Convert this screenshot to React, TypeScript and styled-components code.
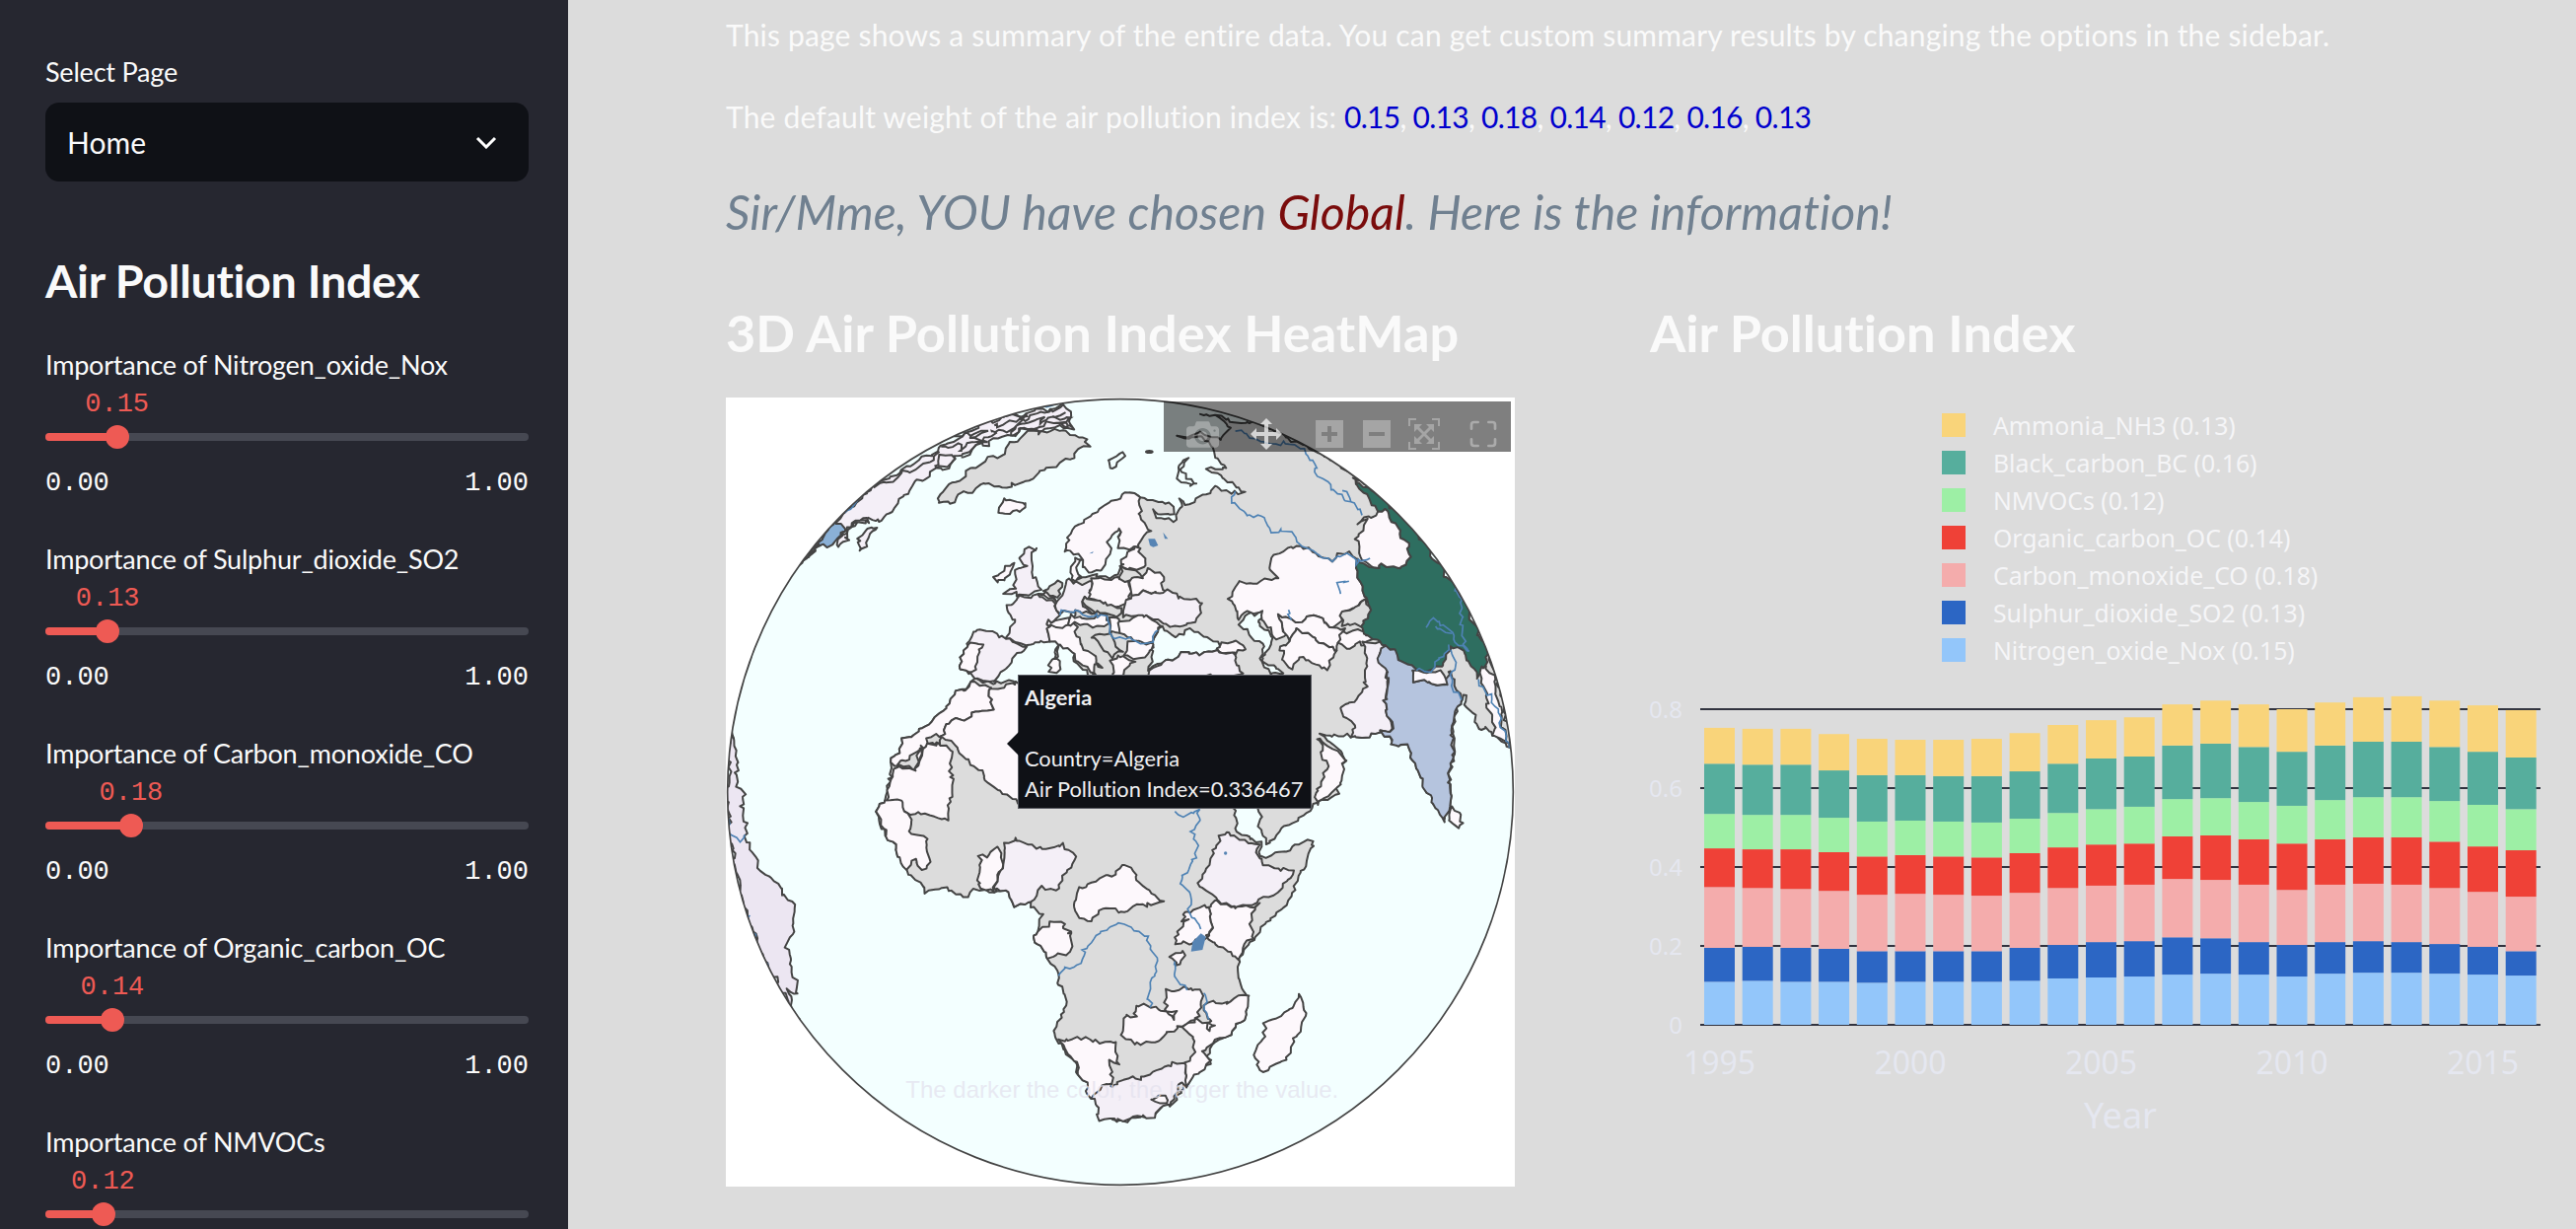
import React from 'react';
import styled, { createGlobalStyle } from 'styled-components';
import { Maximize } from 'lucide-react';

const SANS = `Lato, "Noto Sans", sans-serif`;
const MONO = `"Liberation Mono", monospace`;

const WEIGHTS = [
    ['Nitrogen_oxide_Nox', 0.15],
    ['Sulphur_dioxide_SO2', 0.13],
    ['Carbon_monoxide_CO', 0.18],
    ['Organic_carbon_OC', 0.14],
    ['NMVOCs', 0.12],
] as const;

const DEFAULT_WEIGHTS = ['0.15', '0.13', '0.18', '0.14', '0.12', '0.16', '0.13'];

const LEGEND = [
    ['Ammonia_NH3 (0.13)', '#f9d47a'],
    ['Black_carbon_BC (0.16)', '#56ae9d'],
    ['NMVOCs (0.12)', '#9defa5'],
    ['Organic_carbon_OC (0.14)', '#ef4137'],
    ['Carbon_monoxide_CO (0.18)', '#f4acac'],
    ['Sulphur_dioxide_SO2 (0.13)', '#2c66c4'],
    ['Nitrogen_oxide_Nox (0.15)', '#93c6fa'],
];

// stack colours, bottom to top
const STACK_COLORS = ['#93c6fa', '#2c66c4', '#f4acac', '#ef4137', '#9defa5', '#56ae9d', '#f9d47a'];

// cumulative height of each series per year, measured against the axis (825 = 1.0)
const STACKS = [
    [90, 161, 288, 369, 441, 546, 621],
    [92, 163, 286, 367, 439, 544, 619],
    [90, 161, 284, 367, 439, 544, 619],
    [90, 159, 280, 361, 433, 532, 608],
    [88, 154, 272, 352, 425, 522, 598],
    [90, 154, 274, 355, 427, 522, 596],
    [90, 154, 272, 352, 425, 520, 596],
    [90, 154, 270, 350, 423, 520, 598],
    [92, 161, 276, 359, 431, 530, 610],
    [97, 167, 286, 371, 443, 546, 627],
    [99, 173, 291, 377, 451, 557, 637],
    [101, 175, 293, 379, 456, 561, 643],
    [105, 183, 305, 394, 472, 584, 670],
    [107, 181, 303, 396, 474, 588, 678],
    [105, 173, 293, 388, 466, 581, 670],
    [101, 167, 282, 379, 458, 571, 660],
    [107, 173, 293, 388, 470, 584, 674],
    [109, 175, 295, 392, 476, 592, 685],
    [109, 173, 293, 392, 476, 592, 687],
    [107, 169, 286, 383, 468, 581, 678],
    [105, 163, 278, 373, 460, 571, 668],
    [103, 154, 268, 365, 451, 559, 658],
];

const Y0 = 359;
const toPx = (h: number) => (h / 825) * 400;

const GlobalStyle = createGlobalStyle`
    html, body {
        margin: 0;
        height: 100%;
        overflow: hidden;
        background: #dcdcdc;
        font-family: ${SANS};
        font-variant-ligatures: none;
    }
`;

const Page = styled.div`
    display: flex;
    height: 1246px;
    overflow: hidden;
`;

const Sidebar = styled.aside`
    width: 576px;
    flex: none;
    box-sizing: border-box;
    padding: 57px 40px 0 46px;
    background: #262730;
    color: #fafafa;
    overflow: hidden;
`;

const FieldLabel = styled.div`
    font-size: 27px;
    line-height: 32px;
    letter-spacing: -0.2px;
    white-space: nowrap;
`;

const SelectBox = styled.div`
    display: flex;
    align-items: center;
    justify-content: space-between;
    height: 80px;
    margin-top: 15px;
    padding: 0 32px 0 22px;
    border-radius: 14px;
    background: #0f1116;
    font-size: 30px;
`;

const SidebarTitle = styled.h2`
    margin: 72px 0 42px;
    font-size: 46.7px;
    line-height: 56px;
    font-weight: 700;
    letter-spacing: -0.3px;
    white-space: nowrap;
`;

const SliderBlock = styled.div`
    margin-bottom: 45.5px;
`;

const SliderValue = styled.div`
    margin-top: 8px;
    font-family: ${MONO};
    font-size: 27px;
    line-height: 32px;
    color: #ee5a54;
`;

const Track = styled.div`
    position: relative;
    height: 8px;
    margin: 13px 0 26.5px;
    border-radius: 4px;
    background: #464852;
`;

const TrackFill = styled.div`
    position: absolute;
    left: 0;
    top: 0;
    bottom: 0;
    border-radius: 4px;
    background: #ee5a54;
`;

const Thumb = styled.div`
    position: absolute;
    top: -8px;
    width: 24px;
    height: 24px;
    margin-left: -12px;
    border-radius: 50%;
    background: #ee5a54;
`;

const Bounds = styled.div`
    display: flex;
    justify-content: space-between;
    font-family: ${MONO};
    font-size: 27px;
    line-height: 32px;
`;

const Main = styled.main`
    flex: 1;
    min-width: 0;
    padding: 15px 0 0 160px;
    color: #fafafa;
`;

const Paragraph = styled.p<{ $gap?: number }>`
    margin: ${(p) => p.$gap ?? 0}px 0 0;
    font-size: 30px;
    line-height: 40px;
    letter-spacing: 0.18px;
    white-space: nowrap;
`;

const WeightList = styled.span`
    letter-spacing: -0.72px;
`;

const Weight = styled.span`
    color: #0000cd;
`;

const Greeting = styled.p`
    margin: 41px 0 0;
    font-size: 48.3px;
    line-height: 70px;
    font-style: italic;
    color: #708090;
    white-space: nowrap;
`;

const Chosen = styled.span`
    color: #7a0c0c;
`;

const Columns = styled.div`
    display: grid;
    grid-template-columns: 800px 1fr;
    column-gap: 137px;
    margin-top: 53px;
`;

const Heading = styled.h2`
    margin: 0 0 31px;
    font-size: 52.3px;
    line-height: 70px;
    font-weight: 700;
    white-space: nowrap;
`;

const MapFrame = styled.div`
    position: relative;
    width: 800px;
    height: 800px;
    background: #fff;
    overflow: hidden;
`;

const MapSvg = styled.svg`
    display: block;
    width: 800px;
    height: 800px;
`;

const ModeBar = styled.div`
    position: absolute;
    left: 444px;
    top: 4px;
    display: flex;
    align-items: center;
    box-sizing: border-box;
    width: 352px;
    height: 51px;
    padding: 15px 0 0 23px;
    background: rgba(0, 0, 0, 0.5);
`;

const ModeIcon = styled.svg<{ $gap?: number; $alpha?: number }>`
    flex: none;
    margin-left: ${(p) => p.$gap ?? 0}px;
    fill: rgba(255, 255, 255, ${(p) => p.$alpha ?? 0.3});
    fill-rule: evenodd;
`;

const FullscreenSlot = styled.div`
    display: flex;
    margin-left: 28px;
    color: rgba(255, 255, 255, 0.35);
`;

const Tooltip = styled.div`
    position: absolute;
    left: 296px;
    top: 281px;
    box-sizing: border-box;
    width: 298px;
    height: 136px;
    padding: 6px 0 0 6px;
    background: #0f1116;
    border: 1px solid #5a5c63;
    color: #f0f0f2;
    font-size: 21.8px;
    line-height: 31px;
    white-space: nowrap;

    &::before {
        content: '';
        position: absolute;
        left: -12px;
        top: 57px;
        border-style: solid;
        border-width: 12px 12px 12px 0;
        border-color: transparent #0f1116 transparent transparent;
    }
`;

const TooltipName = styled.div`
    font-weight: 700;
    margin-bottom: 31px;
`;

const ChartHeading = styled(Heading)`
    margin-bottom: 47px;
`;

const Legend = styled.div`
    display: flex;
    flex-direction: column;
    gap: 14px;
    padding-left: 296px;
    height: 261px;
`;

const LegendItem = styled.div`
    display: flex;
    align-items: center;
    gap: 28px;
    height: 24px;
    font-family: "Noto Sans", sans-serif;
    font-size: 24.8px;
    color: #f5f5f7;
    white-space: nowrap;
`;

const Swatch = styled.span<{ $color: string }>`
    width: 24px;
    height: 24px;
    background: ${(p) => p.$color};
`;

const ChartSvg = styled.svg`
    display: block;
    overflow: visible;
    font-family: "Noto Sans", sans-serif;
    fill: #e5e7f0;
`;

const Chevron = () => (
    <svg width="22" height="14" viewBox="0 0 22 14" fill="none" stroke="#fff" strokeWidth="3">
        <path d="M2 3l9 9 9-9" />
    </svg>
);

const Slider = ({ label, value, showBounds }: { label: string; value: number; showBounds: boolean }) => {
    const center = 1.5 + value * 475;
    return (
        <SliderBlock>
            <FieldLabel>Importance of {label}</FieldLabel>
            <SliderValue style={{ paddingLeft: center - 32.5 }}>{value.toFixed(2)}</SliderValue>
            <Track>
                <TrackFill style={{ width: center }} />
                <Thumb style={{ left: center }} />
            </Track>
            {showBounds && (
                <Bounds>
                    <span>0.00</span>
                    <span>1.00</span>
                </Bounds>
            )}
        </SliderBlock>
    );
};

const PINK = '#fdf8fc';
const MAUVE = '#f4eff7';
const GRAY = '#dcdcdc';
const SEA = '#f3ffff';
type Offset = [number, number];
const NW: Offset = [0, 0];
const NE: Offset = [1200, 0];
const SW: Offset = [0, 1200];
const SE: Offset = [1200, 1200];

type Land = [string, string, Offset?];

const LANDS: Land[] = [
    // continents
    [GRAY, '-140,550 -90,545 -10,540 5,495 25,470 20,440 -5,420 -5,395 15,340 0,320 30,290 60,310 100,310 150,320 160,345 130,360 100,350 110,370 160,375 175,345 190,335 170,315 215,325 245,300 270,290 280,265 330,290 378,293 340,260 265,225 290,215 322,210 290,180 285,155 240,120 180,118 240,110 300,125 340,100 290,60 240,50 340,70 420,80 560,140 700,232 800,312 900,410 1000,546 1060,650 1115,770 1150,860 1180,1000 1190,1060 1175,1060 1140,1020 1110,1000 1100,1020 1060,940 1040,900 1020,960 1000,1240 985,1290 900,1130 870,1050 830,1060 800,1020 700,1035 610,1020 690,1100 650,1180 660,1205 590,1240 440,1360 420,1260 395,1200 100,1100 -100,840 -140,790 -170,720 -140,700', NE],
    [GRAY, '760,860 890,870 1040,860 1200,1000 1530,1230 1540,1250 1560,1320 1630,1355 1615,1390 1660,1395 1780,1345 1782,1370 1750,1450 1720,1530 1650,1590 1610,1640 1565,1700 1552,1750 1565,1770 1582,1815 1585,1890 1480,1970 1465,2010 1470,2030 1410,2060 1380,2130 1280,2190 1170,2200 1140,2165 1060,2030 1005,1950 1005,1920 1040,1850 1020,1800 1010,1750 985,1710 935,1650 955,1580 930,1540 880,1545 850,1500 770,1500 725,1515 680,1495 610,1500 550,1435 525,1395 500,1345 470,1305 465,1250 490,1220 500,1115 540,1040 610,1000 660,960 690,905'],
    // seas
    [SEA, '100,790 100,740 125,700 160,725 215,710 265,735 300,750 300,775 210,775 140,800 85,825', NE],
    [SEA, '365,690 395,655 435,650 440,665 420,675 430,695 465,735 465,755 440,775 435,810 500,832 480,843 450,843 430,800 435,755 400,725', NE],
    // north atlantic
    [MAUVE, '220,515 340,370 450,270 660,150 800,70 1030,25 1060,90 900,100 760,150 640,220 600,250 570,260 520,320 480,380 440,365 430,360 420,385 370,395 340,430 300,445 250,480'],
    ['#8ab0d6', '225,510 280,445 300,420 335,375 350,385 365,395 340,420 310,450 285,450 250,480'],
    [MAUVE, '400,420 440,400 465,390 445,420 430,450 410,470 400,450'],
    [MAUVE, '330,445 380,400 420,360 435,375 400,375 370,410 375,440 340,450'],
    [GRAY, '650,325 655,295 700,250 760,210 820,180 920,105 1000,100 1060,115 1100,120 1105,150 1070,160 1040,190 990,210 940,235 900,265 840,270 780,265 720,295 660,325'],
    [PINK, '830,340 850,310 880,315 920,320 905,345 860,352 835,345'],
    [SEA, '1160,185 1200,175 1220,178 1200,195 1180,215 1165,205'],
    [SEA, '175,205 205,185 190,215 200,250 235,265 205,270 180,250', NE],
    // europe
    [PINK, '815,555 850,515 880,510 875,530 850,555 820,562'],
    [MAUVE, '900,485 925,460 945,458 925,485 930,520 945,550 950,590 900,600 850,600 875,575 885,530 910,510 895,490'],
    [MAUVE, '850,630 890,625 890,605 945,600 1000,630 1015,660 985,690 985,735 920,755 855,725 880,680'],
    [MAUVE, '750,715 770,708 855,728 915,760 880,785 860,825 820,860 760,855 745,840 715,835 720,790'],
    [PINK, '750,745 780,745 765,780 750,835 715,835 720,790'],
    [PINK, '985,700 1040,680 1070,700 1065,720 1100,770 1150,820 1120,815 1130,850 1105,830 1030,760 985,735'],
    [PINK, '990,800 1015,795 1015,830 990,835'],
    [PINK, '1000,775 1015,755 1010,790'],
    [PINK, '980,680 1040,670 1040,690 985,700'],
    [MAUVE, '1000,630 1040,550 1060,560 1110,560 1115,610 1080,620 1120,660 1075,645 1020,660 1015,650'],
    [GRAY, '975,590 1010,560 1020,565 1005,610 990,600'],
    [PINK, '950,600 990,600 1000,625'],
    [PINK, '1045,525 1060,495 1080,490 1065,520 1085,545 1055,550'],
    [PINK, '1030,470 1040,410 1100,370 1150,330 1200,300 1230,290 1260,310 1265,340 1260,370 1295,410 1260,445 1220,465 1200,455 1195,395 1170,420 1160,440 1170,480 1145,520 1100,535 1085,495 1060,470'],
    [PINK, '1110,555 1190,545 1225,560 1225,600 1210,630 1170,640 1110,610'],
    [GRAY, '1080,620 1120,610 1200,640 1190,665 1120,655'],
    [PINK, '1040,670 1160,665 1165,690 1100,695 1040,690'],
    [PINK, '1165,670 1240,680 1200,720 1165,710'],
    [GRAY, '1115,730 1170,710 1200,775 1170,790'],
    [PINK, '1170,800 1200,790 1240,800 1200,850 1180,840'],
    [PINK, '0,490 20,470 60,455 75,515 0,520', NE],
    [GRAY, '0,520 50,520 60,545 30,560 0,555', NE],
    [PINK, '30,555 60,545 90,520 125,550 140,590 100,595 35,600 25,580', NE],
    [MAUVE, '10,635 35,600 100,595 145,585 175,610 250,625 245,660 220,680 195,700 160,695 100,665 50,670 10,660', NE],
    [PINK, '0,680 50,668 95,665 120,700 100,740 60,750 20,735 0,720', NE],
    [PINK, '20,745 100,745 90,790 40,790 20,775', NE],
    [PINK, '295,745 350,745 385,770 360,772 305,775', NE],
    [MAUVE, '85,830 140,800 210,775 300,775 345,775 370,845 85,860', NE],
    // asia
    [PINK, '335,610 345,590 365,565 430,560 480,550 455,520 465,490 505,455 560,460 600,470 640,490 700,470 720,510 730,570 755,620 680,650 665,680 640,700 600,665 540,680 480,665 505,720 470,730 440,680 430,650 390,650 365,680 340,630', NE],
    [PINK, '480,665 540,680 600,665 640,700 685,700 670,750 660,770 590,730 540,705 510,735', NE],
    [PINK, '475,770 505,740 510,735 540,705 580,725 660,770 635,825 550,790 515,825 490,775', NE],
    [GRAY, '670,655 750,620 755,650 730,700 690,690 670,690', NE],
    [PINK, '670,710 730,710 765,740 740,755 720,740 695,770 670,750', NE],
    [MAUVE, '745,745 810,755 790,790 820,860 800,940 830,1000 800,1020 700,1035 710,990 660,945 715,925 750,880 745,810', NE],
    ['#2e6e60', '700,245 770,320 780,340 810,345 860,420 885,490 850,525 790,510 770,515 725,490 720,510 730,570 755,620 755,650 730,700 765,740 820,760 860,810 905,830 980,820 1010,760 1040,770 1090,860 1115,800 1115,770 1060,650 1000,546 900,410 800,312', NE],
    [PINK, '720,430 750,375 725,380 765,365 780,340 810,345 860,420 885,490 850,525 790,510 770,515 725,480', NE],
    ['#b5c4de', '785,790 812,755 860,810 905,830 895,865 985,870 1000,830 1025,890 1040,925 1015,960 1005,1130 1000,1240 985,1295 960,1250 900,1130 870,1050 830,1065 800,1020 832,1000 800,940 822,860', NE],
    [PINK, '895,830 980,835 990,870 895,865', NE],
    [PINK, '1095,820 1115,810 1140,870 1175,1050 1140,1020 1105,880', NE],
    [PINK, '600,1040 625,1060 690,1100 665,1180 600,1240 585,1220 630,1115', NE],
    [PINK, '1005,40 1030,60 1035,90 1020,115 1005,90', SE],
    // africa
    [PINK, '500,1115 540,1040 610,1000 660,960 690,905 750,870 805,885 810,945 760,960 670,995 665,1030 610,1045 570,1135 505,1120'],
    [GRAY, '610,1035 660,1030 655,1060 610,1045'],
    [GRAY, '600,1050 570,1130 520,1120 590,1075'],
    [PINK, '805,885 890,870 1040,860 1040,1230 890,1230 830,1205 665,1030 670,995 760,960 810,945'],
    [PINK, '505,1125 570,1135 610,1050 660,1060 690,1085 680,1280 560,1265 495,1225'],
    [PINK, '465,50 490,20 530,25 560,75 560,125 610,140 620,210 600,235 570,205 545,235 525,195 500,145 475,105', SW],
    [PINK, '765,195 790,190 830,175 840,215 815,295 775,295 770,210', SW],
    [MAUVE, '850,150 880,145 930,170 1030,165 1060,200 1030,250 1000,300 965,295 930,340 880,345 850,300 820,295 840,215', SW],
    [PINK, '945,415 985,410 990,395 1025,395 1030,415 1050,415 1045,445 1050,485 1015,490 1000,505 985,510 935,450', SW],
    [PINK, '1010,750 1140,755 1190,765 1190,825 1170,825 1170,880 1140,930 1110,925 1065,830', SW],
    [PINK, '-145,320 -130,295 -60,265 0,235 30,222 45,265 125,338 65,340 15,362 -40,350 -65,375 -115,395 -140,350', SE],
    [PINK, '285,325 320,345 350,355 415,340 400,360 405,445 380,465 362,510 335,490 260,455 282,395 262,350', SE],
    [PINK, '195,365 262,350 282,395 260,450 215,455 170,465 180,420 210,395 195,395', SE],
    [MAUVE, '300,135 330,125 420,160 410,185 440,220 525,240 480,305 420,330 350,355 290,325 235,275 265,215', SE],
    [PINK, '155,495 190,485 190,500 165,525', SE],
    [PINK, '270,645 340,635 385,615 385,690 290,760 255,790 270,825 205,890 190,830 220,790 225,740 175,710 230,695 285,710 270,735 258,725 272,690 258,660', SE],
    [PINK, '50,650 115,660 165,665 165,685 140,660 145,605 190,595 245,610 235,690 175,710 175,725 140,735 105,765 40,760 10,740 10,685 50,680', SE],
    [MAUVE, '190,828 205,890 175,880 170,925 100,985 0,995 -60,1000 -85,925 -30,880 -25,900 0,880 90,860 140,830', SE],
    [PINK, '100,935 135,920 145,935 110,950', SE],
    [PINK, '545,615 560,650 560,680 500,810 470,830 440,850 415,840 410,795 440,740 445,705 515,660', SE],
    // south america
    ['#ece6f2', '15,1020 30,1050 30,1100 40,1190 50,1200 60,1330 75,1375 110,1435 155,1475 205,1545 210,1620 185,1665 210,1775 215,1815 185,1805 215,1880 225,1900 135,1750 60,1570 10,1330 5,1200'],
];

// open lines: [points, offset]
const RIVERS: [string, Offset?][] = [
    ['350,100 400,115 470,145 530,140 570,175 600,210 585,215 640,280 690,320 705,320 740,360', NE],
    ['675,285 705,320', NE],
    ['355,292 340,305 375,350 440,370 460,410 520,408 540,440 640,490 700,480 720,510 725,490 760,490', NE],
    ['695,555 660,570 665,595', NE],
    ['1005,552 1040,620 1030,650 1045,700 1045,760 1060,770', NE],
    ['930,700 945,670 990,690 1030,750 1060,770', NE],
    ['960,697 1000,710', NE],
    ['905,822 940,830 1000,770 1000,755', NE],
    ['1005,770 1020,800 1000,850 1030,910', NE],
    ['1095,860 1110,900 1125,900 1150,960 1180,1060', NE],
    ['1015,660 1075,645 1100,660 1160,670 1165,710 1190,730 1200,730 1260,750 1295,740 1300,715 1320,715'],
    ['175,55 195,70 243,60 243,90 220,120 230,180 215,240 180,255 215,330 210,365 250,410', SE],
    ['-190,553 -150,535 -115,510 -110,480 -60,420 0,402 80,435 115,540 85,620 90,660', SE],
    ['160,510 165,555 195,600', SE],
    ['250,615 265,630 260,660 272,690', SE],
    ['0,60 10,125 40,150 60,140', SW],
    ['65,370 75,420 135,550', SW],
    ['760,80 800,68'],
    ['905,35 1030,12'],
    ['360,350 440,270'],
    ['515,640 520,670', NE],
];

const ARCTIC: string[] = [
    '660,160 700,135 720,160 770,125 790,130 720,180',
    '640,225 655,175 700,190 640,225',
    '460,275 520,240 600,205 650,170',
    '810,85 900,70 880,90 960,60 950,80 1030,45',
    '800,110 880,90 860,115 960,85 1040,75',
    '840,60 920,50 890,70 1000,35 1030,30',
    '700,120 790,100 750,125 830,115',
    '1000,60 1050,60 1010,80 1055,85',
];

// coastlines are traced coarsely, so add a small position-based wobble; borders shared by two countries still meet
const wobble = (x: number, y: number): Offset => [
    5 * Math.sin(0.09 * x + 0.05 * y) + 3.5 * Math.sin(0.21 * y - 0.13 * x + 1) + 2.5 * Math.sin(0.37 * x + 0.29 * y),
    5 * Math.sin(0.07 * y - 0.06 * x + 2) + 3.5 * Math.sin(0.19 * x + 0.15 * y) + 2.5 * Math.sin(0.41 * y - 0.23 * x + 3),
];

const trace = (points: string, at: Offset = NW, closed = false) => {
    const pts = points.split(' ').map((p) => {
        const [x, y] = p.split(',').map(Number);
        return [x + at[0], y + at[1]];
    });
    if (closed) pts.push(pts[0]);
    const out: string[] = [];
    for (let i = 0; i < pts.length - 1; i++) {
        const [ax, ay] = pts[i];
        const [bx, by] = pts[i + 1];
        const steps = Math.max(1, Math.round(Math.hypot(bx - ax, by - ay) / 12));
        for (let s = 0; s < steps; s++) {
            const x = ax + ((bx - ax) * s) / steps;
            const y = ay + ((by - ay) * s) / steps;
            const [dx, dy] = wobble(x, y);
            out.push(`${(x + dx).toFixed(1)},${(y + dy).toFixed(1)}`);
        }
    }
    if (!closed) {
        const [x, y] = pts[pts.length - 1];
        const [dx, dy] = wobble(x, y);
        out.push(`${(x + dx).toFixed(1)},${(y + dy).toFixed(1)}`);
    }
    return out.join(' ');
};

const MapPicture = () => (
    <MapSvg viewBox="0 0 2400 2400">
        <defs>
            <clipPath id="globe">
                <circle cx="1200" cy="1200" r="1195" />
            </clipPath>
        </defs>
        <circle cx="1200" cy="1200" r="1195" fill={SEA} />
        <g clipPath="url(#globe)">
            <g stroke="#444" strokeWidth="6" strokeLinejoin="round">
                {LANDS.map(([fill, points, at], i) => (
                    <polygon key={i} fill={fill} points={trace(points, at, true)} />
                ))}
            </g>
            <g fill="none" stroke="#444" strokeWidth="6">
                {ARCTIC.map((points) => (
                    <polyline key={points} points={trace(points)} />
                ))}
            </g>
            <g fill="none" stroke="#4e82b4" strokeWidth="5">
                {RIVERS.map(([points, at]) => (
                    <polyline key={points} points={trace(points, at)} />
                ))}
            </g>
            <g fill="#5684b4">
                <polygon points="245,430 260,440 250,480 215,485 220,455" transform="translate(1200 1200)" />
                <polygon points="85,430 105,430 115,450 100,455 90,450" transform="translate(1200 0)" />
                <polygon points="130,410 145,430 135,430" transform="translate(1200 0)" />
                <polygon points="1105,475 1118,468 1116,473" />
                <circle cx="1520" cy="1386" r="5" />
            </g>
            <ellipse cx="1288" cy="165" rx="13" ry="6" fill="#444" />
        </g>
        <circle cx="1200" cy="1200" r="1195" fill="none" stroke="#444" strokeWidth="5" />
        <text x="547" y="2130" fill="rgba(228,226,238,0.75)" fontFamily="Liberation Sans" fontSize="72">
            The darker the color, the larger the value.
        </text>
    </MapSvg>
);

const ModeButtons = () => (
    <ModeBar>
        <ModeIcon width="33" height="33" viewBox="0 0 1000 1000">
            <path
                transform="matrix(1 0 0 -1 0 850)"
                d="m500 450c-83 0-150-67-150-150 0-83 67-150 150-150 83 0 150 67 150 150 0 83-67 150-150 150z m400 150h-120c-16 0-34 13-39 29l-31 93c-6 15-23 28-40 28h-340c-16 0-34-13-39-28l-31-94c-6-15-23-28-40-28h-120c-55 0-100-45-100-100v-450c0-55 45-100 100-100h800c55 0 100 45 100 100v450c0 55-45 100-100 100z m-400-550c-138 0-250 112-250 250 0 138 112 250 250 250 138 0 250-112 250-250 0-138-112-250-250-250z m365 380c-19 0-35 16-35 35 0 19 16 35 35 35 19 0 35-16 35-35 0-19-16-35-35-35z"
            />
        </ModeIcon>
        <ModeIcon $gap={32} $alpha={0.7} width="32" height="32" viewBox="0 0 1000 1000">
            <path
                transform="matrix(1 0 0 -1 0 850)"
                d="m1000 350l-187 188 0-125-250 0 0 250 125 0-188 187-187-187 125 0 0-250-250 0 0 125-188-188 186-187 0 125 252 0 0-250-125 0 187-188 188 188-125 0 0 250 250 0 0-126 187 188z"
            />
        </ModeIcon>
        <ModeIcon $gap={34} width="28" height="32" viewBox="0 0 875 1000">
            <path
                transform="matrix(1 0 0 -1 0 850)"
                d="m1 787l0-875 875 0 0 875-875 0z m687-500l-187 0 0-187-125 0 0 187-188 0 0 125 188 0 0 187 125 0 0-187 187 0 0-125z"
            />
        </ModeIcon>
        <ModeIcon $gap={20} width="28" height="32" viewBox="0 0 875 1000">
            <path
                transform="matrix(1 0 0 -1 0 850)"
                d="m0 788l0-876 875 0 0 876-875 0z m688-500l-500 0 0 125 500 0 0-125z"
            />
        </ModeIcon>
        <ModeIcon $gap={18} width="32" height="32" viewBox="0 0 1000 1000">
            <path
                transform="matrix(1 0 0 -1 0 850)"
                d="m250 850l-187 0-63 0 0-62 0-188 63 0 0 188 187 0 0 62z m688 0l-188 0 0-62 188 0 0-188 62 0 0 188 0 62-62 0z m-875-938l0 188-63 0 0-188 0-62 63 0 187 0 0 62-187 0z m875 188l0-188-188 0 0-62 188 0 62 0 0 62 0 188-62 0z m-125 188l-1 0-93-94-156 156 156 156 92-93 2 0 0 250-250 0 0-2 93-92-156-156-156 156 94 92 0 2-250 0 0-250 0 0 93 93 157-156-157-156-93 94 0 0 0-250 250 0 0 0-94 93 156 157 156-157-93-93 0 0 250 0 0 250z"
            />
        </ModeIcon>
        <FullscreenSlot>
            <Maximize size={32} strokeWidth={2} />
        </FullscreenSlot>
    </ModeBar>
);

const StackedBars = () => (
    <ChartSvg width="939" height="480" viewBox="0 0 939 480">
        {[0, 0.2, 0.4, 0.6, 0.8].map((tick) => {
            const y = Y0 - tick * 400;
            return (
                <g key={tick}>
                    <line x1="51" x2="903" y1={y} y2={y} stroke="#31333f" strokeWidth="2" />
                    <text x="33" y={y + 9} textAnchor="end" fontSize="24">
                        {tick === 0 ? '0' : tick}
                    </text>
                </g>
            );
        })}
        {STACKS.map((tops, i) => {
            const x = 55 + i * 38.7;
            return (
                <g key={i}>
                    {tops.map((top, j) => {
                        const base = j === 0 ? 0 : tops[j - 1];
                        return (
                            <rect
                                key={j}
                                x={x}
                                y={Y0 - toPx(top)}
                                width="31"
                                height={toPx(top - base)}
                                fill={STACK_COLORS[j]}
                            />
                        );
                    })}
                </g>
            );
        })}
        {[1995, 2000, 2005, 2010, 2015].map((year) => (
            <text key={year} x={70.5 + (year - 1995) * 38.7} y="409" textAnchor="middle" fontSize="32">
                {year}
            </text>
        ))}
        <text x="477" y="464" textAnchor="middle" fontSize="36">
            Year
        </text>
    </ChartSvg>
);

export default function App() {
    return (
        <Page>
            <GlobalStyle />
            <Sidebar>
                <FieldLabel>Select Page</FieldLabel>
                <SelectBox>
                    Home
                    <Chevron />
                </SelectBox>
                <SidebarTitle>Air Pollution Index</SidebarTitle>
                {WEIGHTS.map(([label, value], i) => (
                    <Slider key={label} label={label} value={value} showBounds={i < WEIGHTS.length - 1} />
                ))}
            </Sidebar>
            <Main>
                <Paragraph>
                    This page shows a summary of the entire data. You can get custom summary results by changing the options in the sidebar.
                </Paragraph>
                <Paragraph $gap={43}>
                    The default weight of the air pollution index is:{' '}
                    <WeightList>
                        {DEFAULT_WEIGHTS.map((weight, i) => (
                            <React.Fragment key={i}>
                                {i > 0 && ', '}
                                <Weight>{weight}</Weight>
                            </React.Fragment>
                        ))}
                    </WeightList>
                </Paragraph>
                <Greeting>
                    Sir/Mme, YOU have chosen <Chosen>Global</Chosen>. Here is the information!
                </Greeting>
                <Columns>
                    <div>
                        <Heading>3D Air Pollution Index HeatMap</Heading>
                        <MapFrame>
                            <MapPicture />
                            <ModeButtons />
                            <Tooltip>
                                <TooltipName>Algeria</TooltipName>
                                <div>Country=Algeria</div>
                                <div>Air Pollution Index=0.336467</div>
                            </Tooltip>
                        </MapFrame>
                    </div>
                    <div>
                        <ChartHeading>Air Pollution Index</ChartHeading>
                        <Legend>
                            {LEGEND.map(([name, color]) => (
                                <LegendItem key={name}>
                                    <Swatch $color={color} />
                                    {name}
                                </LegendItem>
                            ))}
                        </Legend>
                        <StackedBars />
                    </div>
                </Columns>
            </Main>
        </Page>
    );
}
